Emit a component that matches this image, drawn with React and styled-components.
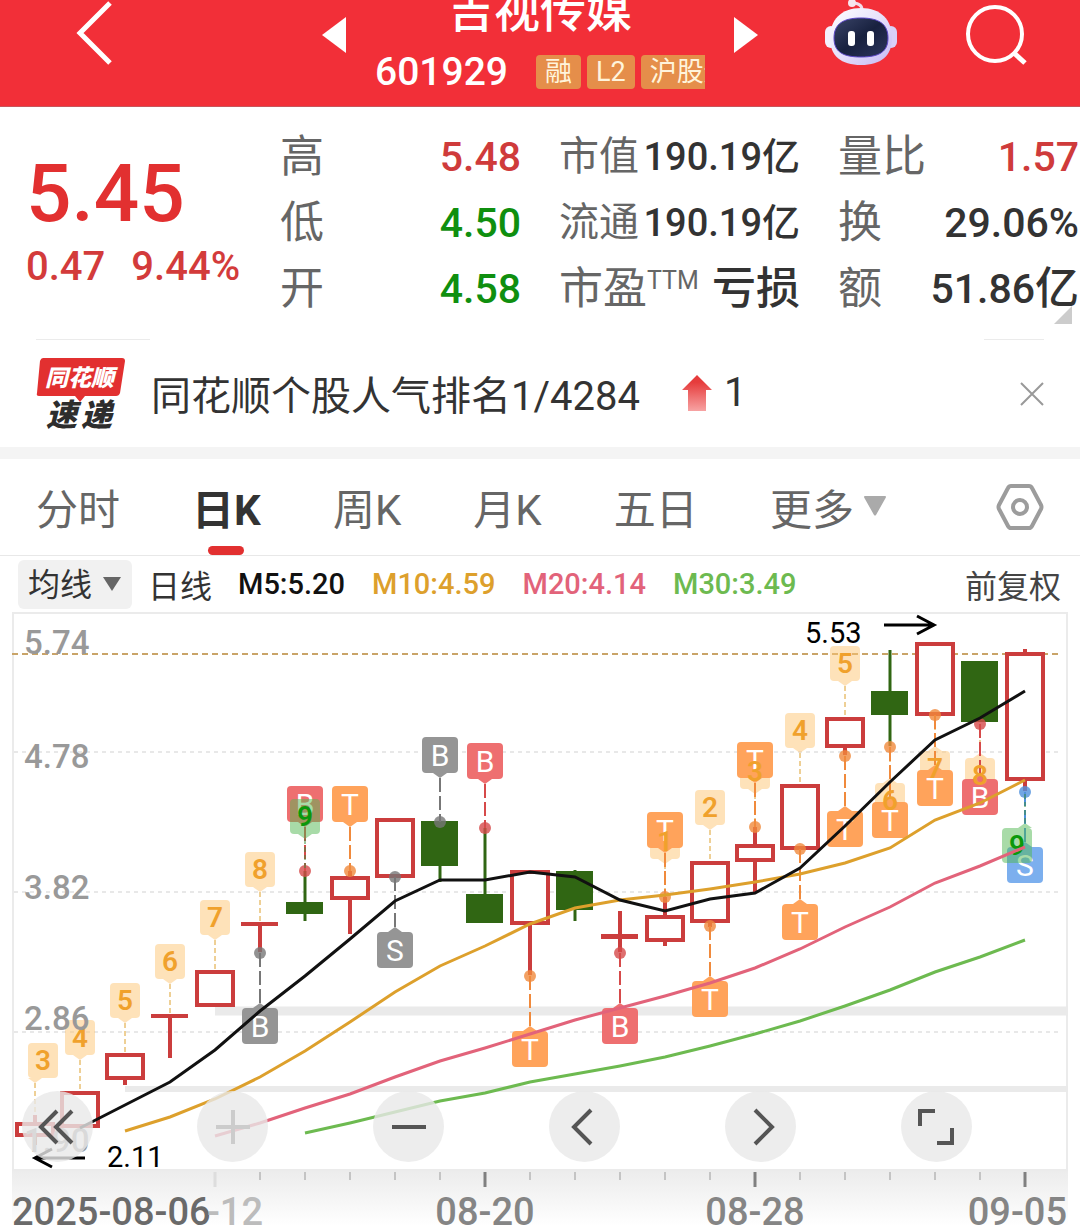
import React from "react";
import styled, { createGlobalStyle } from "styled-components";

const quotes = [
  [
    { label: "高", value: "5.48", tone: "up" },
    { label: "低", value: "4.50", tone: "down" },
    { label: "开", value: "4.58", tone: "down" },
  ],
  [
    { label: "市值", value: "190.19", unit: "亿", small: true },
    { label: "流通", value: "190.19", unit: "亿", small: true },
    { label: "市盈", sup: "TTM", value: "", unit: "亏损" },
  ],
  [
    { label: "量比", value: "1.57", tone: "up" },
    { label: "换", value: "29.06%" },
    { label: "额", value: "51.86", unit: "亿" },
  ],
];

const periods = ["分时", "日K", "周K", "月K", "五日"];

const averages = [
  { name: "M5", value: "5.20", color: "#111111" },
  { name: "M10", value: "4.59", color: "#dda02c" },
  { name: "M20", value: "4.14", color: "#e2637a" },
  { name: "M30", value: "3.49", color: "#6dba50" },
];

// [top, bottom, high, low, kind]
const candles = [
  [1122, 1137, 1115, 1145, "up"],
  [1091, 1128, 1091, 1128, "up"],
  [1053, 1080, 1053, 1085, "up"],
  [1014, 1018, 1014, 1058, "flat"],
  [970, 1007, 970, 1007, "up"],
  [922, 926, 922, 952, "flat"],
  [902, 914, 871, 921, "down"],
  [876, 900, 871, 934, "up"],
  [818, 878, 818, 878, "up"],
  [821, 866, 821, 882, "down"],
  [894, 923, 828, 923, "down"],
  [870, 925, 870, 975, "up"],
  [871, 910, 870, 921, "down"],
  [934, 939, 911, 952, "flat"],
  [915, 942, 897, 946, "up"],
  [861, 923, 861, 927, "up"],
  [844, 862, 827, 893, "up"],
  [784, 850, 784, 850, "up"],
  [717, 748, 717, 755, "up"],
  [691, 715, 650, 746, "down"],
  [642, 716, 642, 716, "up"],
  [661, 722, 661, 722, "down"],
  [652, 781, 649, 791, "up"],
];

const lines = [
  {
    color: "#6dba50",
    start: 6,
    ys: [1133, 1123, 1112, 1101, 1093, 1082, 1074, 1066, 1057, 1046, 1034, 1021, 1006, 990, 972, 957, 940],
  },
  {
    color: "#e2637a",
    start: 4,
    ys: [1136, 1123, 1108, 1094, 1077, 1061, 1048, 1034, 1020, 1008, 996, 983, 968, 949, 927, 907, 883, 866, 847],
  },
  {
    color: "#dda02c",
    start: 2,
    ys: [1131, 1117, 1099, 1077, 1051, 1022, 992, 966, 946, 924, 908, 900, 895, 889, 882, 874, 863, 848, 820, 803, 780],
  },
  {
    color: "#111111",
    start: 1,
    ys: [1128, 1105, 1082, 1050, 1011, 976, 939, 901, 880, 880, 872, 877, 900, 911, 899, 893, 868, 826, 782, 740, 718, 691],
  },
];

const signals = [
  { i: 5, dot: 953, text: "B", tone: "gray" },
  { i: 6, dot: 871, text: "B", tone: "red", above: true },
  { i: 7, dot: 871, text: "T", tone: "orange", above: true },
  { i: 8, dot: 877, text: "S", tone: "gray" },
  { i: 9, dot: 822, text: "B", tone: "gray", above: true },
  { i: 10, dot: 828, text: "B", tone: "red", above: true },
  { i: 11, dot: 976, text: "T", tone: "orange" },
  { i: 13, dot: 953, text: "B", tone: "red" },
  { i: 14, dot: 897, text: "T", tone: "orange", above: true },
  { i: 15, dot: 926, text: "T", tone: "orange" },
  { i: 16, dot: 827, text: "T", tone: "orange", above: true },
  { i: 17, dot: 849, text: "T", tone: "orange" },
  { i: 18, dot: 756, text: "T", tone: "orange" },
  { i: 19, dot: 747, text: "T", tone: "orange" },
  { i: 20, dot: 715, text: "T", tone: "orange" },
  { i: 21, dot: 724, text: "B", tone: "red" },
  { i: 22, dot: 792, text: "S", tone: "blue" },
];

const counts = [
  { i: 0, top: 1043, text: "3", to: 1115, shift: 8 },
  { i: 1, top: 1020, text: "4", to: 1091 },
  { i: 2, top: 983, text: "5", to: 1053 },
  { i: 3, top: 944, text: "6", to: 1014 },
  { i: 4, top: 900, text: "7", to: 970 },
  { i: 5, top: 852, text: "8", to: 922 },
  { i: 14, top: 824, text: "1", to: 897 },
  { i: 15, top: 790, text: "2", to: 861 },
  { i: 16, top: 754, text: "3", to: 827 },
  { i: 17, top: 713, text: "4", to: 784 },
  { i: 18, top: 646, text: "5", to: 717 },
  { i: 19, top: 783, text: "6", to: 747, below: true },
  { i: 20, top: 751, text: "7", to: 716, below: true },
  { i: 21, top: 758, text: "8", to: 722, below: true },
];

const nines = [
  { i: 6, top: 799, text: "9", to: 871, last: true },
  { i: 22, top: 828, text: "9", to: 792, below: true, last: true, shift: -8 },
];

const tones = {
  gray: { fill: "#959595", line: "#777777" },
  red: { fill: "#ee6f70", line: "#d64a4a" },
  orange: { fill: "#ffa35b", line: "#f08a3c" },
  blue: { fill: "#7cafee", line: "#4f90dc" },
};

const prices = [
  ["5.74", 654],
  ["4.78", 768],
  ["3.82", 899],
  ["2.86", 1030],
  ["1.90", 1152],
];

const at = (i) => 35 + i * 45;

function Candle({ i, data }) {
  const [top, bottom, high, low, kind] = data;
  const x = at(i);
  const color = kind === "down" ? "#306613" : "#cb3d3d";
  return (
    <g>
      {kind === "up" ? (
        <>
          <path d={`M${x} ${high}V${top}M${x} ${bottom}V${low}`} stroke={color} strokeWidth="4" />
          <rect x={x - 18} y={top + 2} width="36" height={bottom - top - 4} fill="#fff" stroke={color} strokeWidth="4" />
        </>
      ) : (
        <>
          <path d={`M${x} ${high}V${low}`} stroke={color} strokeWidth={kind === "down" ? 3 : 4} />
          <rect x={x - 19} y={top} width="37" height={bottom - top} fill={color} />
        </>
      )}
    </g>
  );
}

function Signal({ i, dot, text, tone, above }) {
  const x = at(i);
  const top = above ? dot - 85 : dot + 55;
  const tip = above ? top + 41 : top - 5;
  const base = above ? top + 36 : top;
  const { fill, line } = tones[tone];
  return (
    <g>
      <path d={`M${x} ${tip}V${dot}`} stroke={line} strokeWidth="2" strokeDasharray="14 4" />
      <circle cx={x} cy={dot} r="6" fill={line} fillOpacity="0.8" />
      <rect x={x - 18} y={top} width="36" height="36" rx="4" fill={fill} />
      <path d={`M${x - 7} ${base}L${x} ${tip}L${x + 7} ${base}Z`} fill={fill} />
      <BadgeText x={x} y={top + 29} fill="#fff" $size="30px">
        {text}
      </BadgeText>
    </g>
  );
}

function CountFlag({ i, top, to, below, last, shift = 0 }) {
  const x = at(i);
  const base = below ? top : top + 35;
  const tip = below ? top - 5 : top + 40;
  return (
    <g>
      <path d={`M${x} ${tip}V${to}`} stroke={last ? "#3d8a3d" : "#dda02c"} strokeDasharray="5 3" />
      <g fill={last ? "#52b852" : "#fdc673"} fillOpacity="0.5">
        <rect x={x + shift - 15} y={top} width="30" height="35" rx="4" />
        <path d={`M${x - 7} ${base}L${x} ${tip}L${x + 7} ${base}Z`} />
      </g>
    </g>
  );
}

function CountText({ i, top, text, last, shift = 0 }) {
  return (
    <BadgeText x={at(i) + shift} y={top + 27} fill={last ? "#0b980b" : "#f0a12c"} $size="28px" $bold>
      {text}
    </BadgeText>
  );
}

function KChart() {
  return (
    <Drawing viewBox="0 612 1080 614" role="img" aria-label="日K线图">
      <defs>
        <linearGradient id="axis" x1="0" y1="0" x2="0" y2="1">
          <stop offset="0" stopColor="#ececec" />
          <stop offset="1" stopColor="#ffffff" />
        </linearGradient>
      </defs>
      <rect x="12" y="1171" width="1056" height="55" fill="url(#axis)" />
      <rect x="13" y="613" width="1054" height="557" fill="#fff" stroke="#ebebeb" strokeWidth="2" />
      {[752, 892, 1032].map((y) => (
        <path key={y} d={`M14 ${y}H1062`} stroke="#e8e8e8" strokeWidth="2" strokeDasharray="4 4" />
      ))}
      <path d="M215 1011H1068" stroke="#eaeaea" strokeWidth="9" />
      <path d="M125 1089H1068" stroke="#eaeaea" strokeWidth="6" />
      <path d="M12 654H1062" stroke="#c9a468" strokeWidth="2" strokeDasharray="6 4" />
      {candles.map((c, i) => (
        <Candle key={i} i={i} data={c} />
      ))}
      {counts.map((c) => (
        <CountFlag key={c.i} {...c} />
      ))}
      {signals.map((s) => (
        <Signal key={s.i} {...s} />
      ))}
      {nines.map((c) => (
        <CountFlag key={c.i} {...c} />
      ))}
      {[...counts, ...nines].map((c) => (
        <CountText key={c.i} {...c} />
      ))}
      {prices.map(([text, y]) => (
        <PriceText key={text} x="24" y={y}>
          {text}
        </PriceText>
      ))}
      {lines.map((l) => (
        <polyline
          key={l.color}
          points={l.ys.map((y, n) => `${at(l.start + n)},${y}`).join(" ")}
          fill="none"
          stroke={l.color}
          strokeWidth="3"
        />
      ))}
      <MarkText x="805" y="643">5.53</MarkText>
      <path d="M884 625H934M917 616L934 625L917 634" fill="none" stroke="#000" strokeWidth="3" />
      <MarkText x="107" y="1167">2.11</MarkText>
      <path d="M85 1158H35M52 1149L35 1158L52 1167" fill="none" stroke="#000" strokeWidth="3" />
      {candles.map((c, i) => {
        if (i < 4) return null;
        const major = (i - 4) % 6 === 0;
        return (
          <path
            key={i}
            d={`M${at(i)} 1172V${major ? 1187 : 1180}`}
            stroke={i > 4 && major ? "#808080" : i === 4 ? "#dddddd" : "#c4c4c4"}
            strokeWidth={major ? 3 : 2}
          />
        );
      })}
      <DateText x="12" y="1225" fill="#6a6a6a">2025-08-06</DateText>
      <DateText x="263" y="1225" fill="#bcbcbc" textAnchor="end">-12</DateText>
      <DateText x="485" y="1225" fill="#858585" textAnchor="middle">08-20</DateText>
      <DateText x="755" y="1225" fill="#858585" textAnchor="middle">08-28</DateText>
      <DateText x="1067" y="1225" fill="#858585" textAnchor="end">09-05</DateText>
    </Drawing>
  );
}

function Robot() {
  return (
    <svg width="72" height="66" viewBox="0 0 72 66">
      <defs>
        <linearGradient id="shell" x1="0" y1="0" x2="1" y2="1">
          <stop offset="0" stopColor="#ffffff" />
          <stop offset="0.5" stopColor="#e6e0fa" />
          <stop offset="1" stopColor="#c4b8f4" />
        </linearGradient>
        <linearGradient id="visor" x1="0" y1="0" x2="1" y2="1">
          <stop offset="0" stopColor="#3a4468" />
          <stop offset="0.5" stopColor="#18213f" />
          <stop offset="1" stopColor="#2c355c" />
        </linearGradient>
      </defs>
      <path d="M37 10C37 5 33 3 27 3" fill="none" stroke="#f3dcea" strokeWidth="3" />
      <circle cx="27" cy="3" r="4" fill="#f7e6ee" />
      <rect x="0" y="26" width="12" height="22" rx="6" fill="#f4f0fd" />
      <rect x="60" y="26" width="12" height="22" rx="6" fill="#d9d0f8" />
      <path d="M36 8C56 8 67 20 67 38C67 56 56 65 36 65C16 65 5 56 5 38C5 20 16 8 36 8Z" fill="url(#shell)" />
      <path d="M36 18C54 18 63 24 63 38C63 52 54 57 36 57C18 57 9 52 9 38C9 24 18 18 36 18Z" fill="url(#visor)" stroke="#5b46c8" strokeWidth="1" />
      <rect x="23" y="31" width="7" height="15" rx="3" fill="#fff" />
      <rect x="42" y="31" width="7" height="15" rx="3" fill="#fff" />
    </svg>
  );
}

function App() {
  return (
    <Page>
      <GlobalStyle />
      <Header>
        <BarButton aria-label="返回">
          <svg width="60" height="66" viewBox="0 0 60 66">
            <path d="M57 3L27 33L57 63" fill="none" stroke="#fff" strokeWidth="5" />
          </svg>
        </BarButton>
        <Switcher>
          <ArrowButton aria-label="上一只">
            <svg width="24" height="36" viewBox="0 0 24 36">
              <path d="M24 0V36L0 18Z" fill="#fff" />
            </svg>
          </ArrowButton>
          <Stock>
            <StockName>吉视传媒</StockName>
            <StockMeta>
              <Code>601929</Code>
              <Tag>融</Tag>
              <Tag>L2</Tag>
              <Tag>沪股通</Tag>
            </StockMeta>
          </Stock>
          <ArrowButton aria-label="下一只">
            <svg width="24" height="36" viewBox="0 0 24 36">
              <path d="M0 0V36L24 18Z" fill="#fff" />
            </svg>
          </ArrowButton>
        </Switcher>
        <Actions>
          <BarButton aria-label="智能助手">
            <Robot />
          </BarButton>
          <BarButton aria-label="搜索">
            <svg width="62" height="66" viewBox="0 0 62 66">
              <circle cx="30" cy="34" r="27" fill="none" stroke="#fff" strokeWidth="4" />
              <path d="M49 53L60 63" stroke="#fff" strokeWidth="5" />
            </svg>
          </BarButton>
        </Actions>
      </Header>

      <Quote>
        <PriceBlock>
          <Price>5.45</Price>
          <Change>
            <span>0.47</span>
            <span>9.44%</span>
          </Change>
        </PriceBlock>
        {quotes.map((col, n) => (
          <QuoteList key={n}>
            {col.map((q) => (
              <QuoteRow key={q.label}>
                <Label $small={q.small}>
                  {q.label}
                  {q.sup && <Sup>{q.sup}</Sup>}
                </Label>
                <Value $tone={q.tone} $small={q.small}>
                  {q.value}
                  {q.unit && <Unit $small={q.small}>{q.unit}</Unit>}
                </Value>
              </QuoteRow>
            ))}
          </QuoteList>
        ))}
        <Corner />
      </Quote>

      <Rules>
        <Rule $width="114px" />
        <Rule $width="60px" />
      </Rules>
      <Notice>
        <svg width="90" height="76" viewBox="0 0 90 76">
          <path d="M7 2H86Q89 2 89 5L84 37Q83 40 80 40H49L44 46L39 40H3Q0 40 1 37L4 5Q5 2 7 2Z" fill="#e23030" />
          <LogoText x="9" y="30" fill="#fff" fontSize="23">同花顺</LogoText>
          <LogoText x="10" y="70" fill="#2d2d2d" fontSize="31">速</LogoText>
          <LogoText x="45" y="70" fill="#2d2d2d" fontSize="31">递</LogoText>
        </svg>
        <NoticeLink href="#rank">
          同花顺个股人气排名1/4284
          <svg width="30" height="36" viewBox="0 0 30 36">
            <defs>
              <linearGradient id="rise" x1="0" y1="0" x2="0" y2="1">
                <stop offset="0.2" stopColor="#e63c3c" />
                <stop offset="1" stopColor="#f7a3a3" />
              </linearGradient>
            </defs>
            <path d="M15 0L30 15H24V36H6V15H0Z" fill="url(#rise)" />
          </svg>
          <span>1</span>
        </NoticeLink>
        <IconButton aria-label="关闭">
          <svg width="24" height="24" viewBox="0 0 24 24">
            <path d="M1 1L23 23M23 1L1 23" stroke="#999" strokeWidth="2" />
          </svg>
        </IconButton>
      </Notice>

      <TabBar>
        <Tabs>
          {periods.map((p) => (
            <Tab key={p} $active={p === "日K"}>
              {p}
            </Tab>
          ))}
          <Tab aria-haspopup="menu">
            更多
            <svg width="22" height="20" viewBox="0 0 22 20">
              <path d="M1 0H21Q23 0 21 3L12 19Q11 20 10 19L1 3Q-1 0 1 0Z" fill="#aaa" />
            </svg>
          </Tab>
        </Tabs>
        <IconButton aria-label="设置">
          <svg width="48" height="48" viewBox="0 0 48 48">
            <path
              d="M15 3H33Q35 3 36 5L45 22Q46 24 45 26L36 43Q35 45 33 45H15Q13 45 12 43L3 26Q2 24 3 22L12 5Q13 3 15 3Z"
              fill="none"
              stroke="#9c9c9c"
              strokeWidth="4"
            />
            <circle cx="24" cy="24" r="7" fill="none" stroke="#9c9c9c" strokeWidth="4" />
          </svg>
        </IconButton>
      </TabBar>

      <Legend>
        <SelectBox>
          <Select aria-label="指标" defaultValue="均线">
            <option>均线</option>
          </Select>
          <svg width="18" height="14" viewBox="0 0 18 14">
            <path d="M0 0H18L9 14Z" fill="#666" />
          </svg>
        </SelectBox>
        <LegendTitle>日线</LegendTitle>
        <Averages>
          {averages.map((a) => (
            <Average key={a.name} $color={a.color}>
              {a.name}:{a.value}
            </Average>
          ))}
        </Averages>
        <Adjust>前复权</Adjust>
      </Legend>

      <ChartBox>
        <KChart />
        <Controls>
          <RoundButton aria-label="最早">
            <svg width="38" height="38" viewBox="0 0 38 38">
              <path d="M19 3L3 19L19 35M34 3L18 19L34 35" />
            </svg>
          </RoundButton>
          <RoundButton aria-label="放大" disabled>
            <svg width="38" height="38" viewBox="0 0 38 38">
              <path d="M19 2V36M2 19H36" />
            </svg>
          </RoundButton>
          <RoundButton aria-label="缩小">
            <svg width="38" height="38" viewBox="0 0 38 38">
              <path d="M2 19H36" />
            </svg>
          </RoundButton>
          <RoundButton aria-label="左移">
            <svg width="38" height="38" viewBox="0 0 38 38">
              <path d="M25 2L8 19L25 36" />
            </svg>
          </RoundButton>
          <RoundButton aria-label="右移">
            <svg width="38" height="38" viewBox="0 0 38 38">
              <path d="M13 2L30 19L13 36" />
            </svg>
          </RoundButton>
          <RoundButton aria-label="全屏">
            <svg width="38" height="38" viewBox="0 0 38 38">
              <path d="M3 18V3H18M35 20V35H20" />
            </svg>
          </RoundButton>
        </Controls>
      </ChartBox>
    </Page>
  );
}

export default App;

const sans = `Roboto, "Noto Sans CJK SC", sans-serif`;

const GlobalStyle = createGlobalStyle`
  * {
    box-sizing: border-box;
  }
  body {
    margin: 0;
    background-color: #fff;
    font-family: ${sans};
    color: #333;
  }
  button, select {
    font-family: inherit;
    color: inherit;
    border: 0;
    padding: 0;
    background: none;
  }
  svg {
    display: block;
    flex-shrink: 0;
  }
`;

const Page = styled.main`
  display: flex;
  flex-direction: column;
  overflow: hidden;
`;

const Header = styled.header`
  display: grid;
  grid-template-columns: 1fr auto 1fr;
  align-content: end;
  align-items: end;
  height: 107px;
  padding: 0 53px;
  overflow: hidden;
  background-color: #f22f38;
  border-bottom: 1px solid #c8555b;
`;

const IconButton = styled.button`
  display: flex;
  align-items: center;
  cursor: pointer;
`;

const BarButton = styled(IconButton)`
  margin-bottom: 40px;
`;

const ArrowButton = styled(IconButton)`
  margin-bottom: 53px;
`;

const Switcher = styled.div`
  display: flex;
  align-items: end;
  gap: 29px;
`;

const Stock = styled.div`
  width: 330px;
  padding-bottom: 13px;
`;

const StockName = styled.h1`
  margin: 0 0 10px;
  font-size: 46px;
  line-height: 60px;
  font-weight: 500;
  text-align: center;
  color: #fff;
`;

const StockMeta = styled.div`
  display: flex;
  align-items: center;
  gap: 6px;
  height: 42px;
  overflow: hidden;
`;

const Code = styled.span`
  margin-right: 22px;
  font-size: 39px;
  line-height: 42px;
  font-weight: 500;
  color: #fff;
`;

const Tag = styled.span`
  flex-shrink: 0;
  padding: 0 9px;
  border-radius: 4px;
  font-size: 27px;
  line-height: 34px;
  color: #fff4dc;
  background-color: #e58e4a;
`;

const Actions = styled.div`
  display: flex;
  align-items: end;
  justify-content: flex-end;
  gap: 68px;
`;

const Quote = styled.section`
  position: relative;
  display: grid;
  grid-template-columns: 216fr 241fr 241fr 241fr;
  gap: 38px;
  padding: 17px 1px 17px 26px;
`;

const PriceBlock = styled.div`
  min-width: 0;
  font-weight: 500;
  white-space: nowrap;
`;

const Price = styled.div`
  padding-top: 22px;
  font-size: 80px;
  line-height: 96px;
  color: #e23030;
`;

const Change = styled.div`
  display: flex;
  gap: 26px;
  font-size: 40px;
  line-height: 50px;
  color: #d33b3b;
`;

const QuoteList = styled.dl`
  margin: 0;
  min-width: 0;
`;

const QuoteRow = styled.div`
  display: flex;
  justify-content: space-between;
  align-items: center;
  height: 66px;
  white-space: nowrap;
`;

const Label = styled.dt`
  display: flex;
  font-size: ${(props) => (props.$small ? "40px" : "44px")};
  line-height: 66px;
  color: #666;
`;

const Sup = styled.sup`
  font-size: 25px;
  line-height: 50px;
`;

const Value = styled.dd`
  display: flex;
  align-items: center;
  margin: 0;
  font-size: ${(props) => (props.$small ? "38px" : "41px")};
  line-height: 66px;
  font-weight: 500;
  color: ${(props) => {
    if (props.$tone === "up") return "#cf3b3b";
    if (props.$tone === "down") return "#0f8f0f";
    return "#333";
  }};
`;

const Unit = styled.span`
  font-size: ${(props) => (props.$small ? "38px" : "44px")};
`;

const Corner = styled.i`
  position: absolute;
  right: 8px;
  bottom: 15px;
  border-left: 18px solid transparent;
  border-bottom: 18px solid #ccc;
`;

const Rules = styled.div`
  display: flex;
  justify-content: space-between;
  padding: 0 36px;
`;

const Rule = styled.span`
  width: ${(props) => props.$width};
  height: 1px;
  background-color: #ebebeb;
`;

const Notice = styled.section`
  display: flex;
  align-items: center;
  height: 107px;
  padding: 0 36px;
`;

const LogoText = styled.text`
  font-family: "Noto Sans CJK SC", sans-serif;
  font-style: italic;
  font-weight: 900;
`;

const NoticeLink = styled.a`
  display: flex;
  flex: 1;
  align-items: center;
  margin-left: 25px;
  padding-bottom: 2px;
  font-size: 40px;
  white-space: nowrap;
  text-decoration: none;
  color: #333;
  svg {
    margin: 0 12px 0 42px;
  }
`;

const TabBar = styled.nav`
  display: flex;
  justify-content: space-between;
  align-items: center;
  padding: 0 36px;
  border-top: 12px solid #f4f4f4;
  border-bottom: 1px solid #e8e8e8;
`;

const Tabs = styled.div`
  display: flex;
  flex: 1;
  justify-content: space-between;
  margin-right: 110px;
`;

const Tab = styled.button`
  position: relative;
  display: flex;
  align-items: center;
  gap: 10px;
  height: 96px;
  padding-bottom: 2px;
  font-size: 42px;
  font-weight: ${(props) => (props.$active ? 700 : 400)};
  color: ${(props) => (props.$active ? "#333" : "#666")};
  cursor: pointer;
  &::after {
    content: "";
    display: ${(props) => (props.$active ? "block" : "none")};
    position: absolute;
    bottom: 0;
    left: calc(50% - 18px);
    width: 36px;
    height: 9px;
    border-radius: 5px;
    background-color: #e23030;
  }
`;

const Legend = styled.div`
  display: flex;
  align-items: center;
  height: 56px;
  padding: 0 19px 0 18px;
  font-size: 32px;
  white-space: nowrap;
`;

const SelectBox = styled.label`
  position: relative;
  display: flex;
  align-items: center;
  border-radius: 6px;
  background-color: #f1f1f1;
  svg {
    position: absolute;
    right: 11px;
    pointer-events: none;
  }
`;

const Select = styled.select`
  appearance: none;
  height: 49px;
  padding: 2px 39px 0 10px;
  font-size: 32px;
`;

const LegendTitle = styled.span`
  margin-left: 16px;
`;

const Averages = styled.div`
  display: flex;
  flex: 1;
  gap: 27px;
  margin-left: 26px;
`;

const Average = styled.span`
  font-size: 29px;
  font-weight: 500;
  color: ${(props) => props.$color};
`;

const Adjust = styled.span`
  color: #444;
`;

const ChartBox = styled.section`
  position: relative;
`;

const Drawing = styled.svg`
  width: 100%;
  height: auto;
`;

const PriceText = styled.text`
  font-size: 33px;
  font-weight: 500;
  fill: #999;
`;

const BadgeText = styled.text`
  font-size: ${(props) => props.$size};
  font-weight: ${(props) => (props.$bold ? 600 : 400)};
  text-anchor: middle;
`;

const MarkText = styled.text`
  font-size: 29px;
  fill: #000;
`;

const DateText = styled.text`
  font-size: 38px;
  font-weight: 500;
`;

const Controls = styled.div`
  position: absolute;
  left: 2%;
  right: 10%;
  bottom: 64px;
  display: flex;
  justify-content: space-between;
`;

const RoundButton = styled.button`
  display: grid;
  place-items: center;
  width: 71px;
  height: 71px;
  border-radius: 50%;
  background-color: rgba(232, 232, 232, 0.8);
  cursor: pointer;
  svg {
    fill: none;
    stroke: ${(props) => (props.disabled ? "#cccccc" : "#555555")};
    stroke-width: 4;
  }
`;
